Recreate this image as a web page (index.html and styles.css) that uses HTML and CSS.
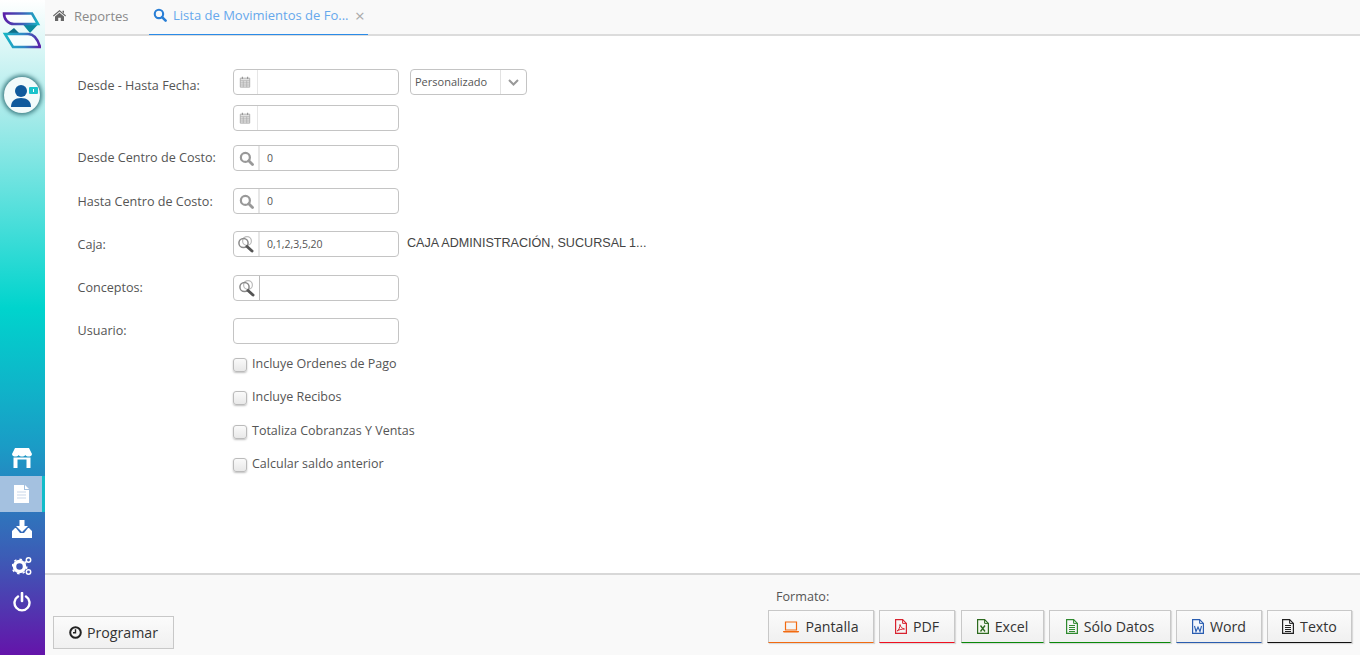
FILE: index.html
```html
<!DOCTYPE html>
<html lang="es">
<head>
  <meta charset="UTF-8">
  <title>Lista de Movimientos de Fondos</title>
  <link rel="stylesheet" href="styles.css">
</head>
<body>
  <svg width="0" height="0" class="defs">
    <defs>
      <linearGradient id="logo-top" x1="0" y1="0" x2="1" y2="0"><stop offset="0" stop-color="#5a1fa8"/><stop offset=".55" stop-color="#3f5fb8"/><stop offset="1" stop-color="#17b4c4"/></linearGradient>
      <linearGradient id="logo-bottom" x1="0" y1="0" x2="1" y2="0"><stop offset="0" stop-color="#17b4c4"/><stop offset=".55" stop-color="#2f86c4"/><stop offset="1" stop-color="#5a1fa8"/></linearGradient>
      <symbol id="i-search" viewBox="0 0 16 16"><circle cx="6.800" cy="6.800" r="4.800" fill="none" stroke="currentColor" stroke-width="2.400"/><path d="M10.400 10.400L14.400 14.400" stroke="currentColor" stroke-width="3" stroke-linecap="round"/></symbol>
      <symbol id="i-multi" viewBox="0 0 18 18"><circle cx="10" cy="6" r="4.400" fill="none" stroke="#bbb" stroke-width="1.200"/><circle cx="6.500" cy="8" r="4.600" fill="none" stroke="#8a8a8a" stroke-width="1.500"/><path d="M10 11.500L15 16" stroke="#555" stroke-width="3" stroke-linecap="round"/></symbol>
      <symbol id="i-cal" viewBox="0 0 14 14"><path d="M1.500 2.500h11v10.500h-11z" fill="#e2e2e2" stroke="#aaa" stroke-width="1"/><path d="M1.500 5.500h11M5 5.500V13M9 5.500V13M1.500 8h11M1.500 10.500h11" stroke="#aaa" stroke-width=".8"/><path d="M4 1v2.500M10 1v2.500" stroke="#999" stroke-width="1.400"/></symbol>
    </defs>
  </svg>

  <aside class="sidebar">
    <svg class="logo" width="40" height="38" viewBox="0 0 40 38">
      <path d="M4 23L13 16L20 23z" fill="#0f6f88"/>
      <path d="M22 12.500H37L29 21z" fill="#0a8a9d"/>
      <path d="M3 1.500H31L37 12H13C7 12 3 7 3 1.500z" fill="#fff" fill-opacity=".7" stroke="url(#logo-top)" stroke-width="2.600"/>
      <path d="M4 22H27C33 22 37 28 39 35H12z" fill="#fff" fill-opacity=".7" stroke="url(#logo-bottom)" stroke-width="2.600"/>
    </svg>
    <div class="avatar">
      <svg width="26" height="26" viewBox="0 0 26 26"><circle cx="11" cy="7" r="6" fill="#0f5a9c"/><path d="M1 23c0-6 4-9 10-9s10 3 10 9z" fill="#0f5a9c"/></svg>
      <span class="avatar-badge"></span>
    </div>
    <nav class="side-nav">
      <a class="side-item">
        <svg width="20" height="20" viewBox="0 0 20 20"><path d="M3 0h14l3 6c0 2-2 2.500-3.300 2.500S14 8 13.300 7c-.6 1-2 1.500-3.300 1.500S7.300 8 6.700 7C6 8 4.600 8.500 3.300 8.500S0 8 0 6z" fill="#fff"/><path d="M1.500 9.500h17V20h-4v-8.500h-9V20h-4z" fill="#fff"/></svg>
      </a>
      <a class="side-item active">
        <svg width="15" height="18" viewBox="0 0 15 18"><path d="M0 0h10v5h5v13H0z" fill="#fff"/><path d="M11 0l4 4h-4z" fill="#fff"/><path d="M3 7h9M3 10h9M3 13h9" stroke="#dbe5f1" stroke-width="1.500"/></svg>
      </a>
      <a class="side-item side-dl">
        <svg width="20" height="18" viewBox="0 0 20 18"><path d="M7.500 0h5v6h3.500l-6 6-6-6h3.500z" fill="#fff"/><path d="M0 11l3-3h1l4 5h4l4-5h1l3 3v7H0z" fill="#fff"/></svg>
      </a>
      <a class="side-item">
        <svg width="20" height="20" viewBox="0 0 20 20"><circle cx="7.500" cy="10.500" r="5" fill="none" stroke="#fff" stroke-width="3.500"/><circle cx="7.500" cy="10.500" r="7.300" fill="none" stroke="#fff" stroke-width="1.500" stroke-dasharray="2.500 3.200"/><circle cx="16.500" cy="4" r="2.200" fill="none" stroke="#fff" stroke-width="1.500"/><circle cx="16.500" cy="16" r="2.200" fill="none" stroke="#fff" stroke-width="1.500"/></svg>
      </a>
      <a class="side-item">
        <svg width="18" height="20" viewBox="0 0 18 20"><path d="M5 4.500a7.500 7.500 0 1 0 8 0" fill="none" stroke="#fff" stroke-width="2.400" stroke-linecap="round"/><path d="M9 1v8" stroke="#fff" stroke-width="2.600" stroke-linecap="round"/></svg>
      </a>
    </nav>
  </aside>

  <main class="main">
    <header class="tabs">
      <a class="tab">
        <svg width="13" height="11" viewBox="0 0 13 11"><path d="M6.500 0L13 5.600l-.7.800L6.500 1.500.7 6.400 0 5.600z" fill="#666"/><path d="M2 6.500L6.500 2.700 11 6.500V11H7.800V7.800H5.200V11H2z" fill="#666"/><path d="M9.500 .8h1.500v2.500L9.500 2z" fill="#666"/></svg>
        Reportes
      </a>
      <a class="tab tab-active">
        <svg class="tab-search" width="14" height="14"><use href="#i-search"/></svg>
        Lista de Movimientos de Fo...
        <span class="tab-close">×</span>
      </a>
    </header>

    <form class="form">
      <div class="row row-date">
        <label class="label">Desde - Hasta Fecha:</label>
        <div class="date-col">
          <div class="date-line">
            <div class="field"><span class="addon addon-cal"><svg width="12" height="12"><use href="#i-cal"/></svg></span><input class="input"></div>
            <div class="select"><span class="select-text">Personalizado</span><span class="select-arrow"><svg width="11" height="7" viewBox="0 0 11 7"><path d="M1 1l4.500 4.500L10 1" fill="none" stroke="#999" stroke-width="2"/></svg></span></div>
          </div>
          <div class="field"><span class="addon addon-cal"><svg width="12" height="12"><use href="#i-cal"/></svg></span><input class="input"></div>
        </div>
      </div>
      <div class="row row-cc1">
        <label class="label">Desde Centro de Costo:</label>
        <div class="field"><span class="addon"><svg class="icon-search" width="15" height="15"><use href="#i-search"/></svg></span><input class="input" value="0"></div>
      </div>
      <div class="row row-cc2">
        <label class="label">Hasta Centro de Costo:</label>
        <div class="field"><span class="addon"><svg class="icon-search" width="15" height="15"><use href="#i-search"/></svg></span><input class="input" value="0"></div>
      </div>
      <div class="row row-caja">
        <label class="label">Caja:</label>
        <div class="field"><span class="addon"><svg width="18" height="18"><use href="#i-multi"/></svg></span><input class="input" value="0,1,2,3,5,20"></div>
        <span class="desc">CAJA ADMINISTRACIÓN, SUCURSAL 1...</span>
      </div>
      <div class="row row-conc">
        <label class="label">Conceptos:</label>
        <div class="field"><span class="addon addon-plain"><svg width="18" height="18"><use href="#i-multi"/></svg></span><input class="input input-boxed"></div>
      </div>
      <div class="row row-user">
        <label class="label">Usuario:</label>
        <div class="field"><input class="input"></div>
      </div>
      <div class="checks">
        <label class="check"><span class="box"></span>Incluye Ordenes de Pago</label>
        <label class="check"><span class="box"></span>Incluye Recibos</label>
        <label class="check"><span class="box"></span>Totaliza Cobranzas Y Ventas</label>
        <label class="check"><span class="box"></span>Calcular saldo anterior</label>
      </div>
    </form>

    <footer class="footer">
      <button type="button" class="btn btn-program">
        <svg width="13" height="13" viewBox="0 0 13 13"><circle cx="6.500" cy="6.500" r="5.300" fill="none" stroke="#222" stroke-width="2"/><path d="M6.500 3.200v3.500H4" fill="none" stroke="#222" stroke-width="1.400"/></svg>
        Programar
      </button>
      <div class="formats">
        <div class="formats-label">Formato:</div>
        <div class="formats-buttons">
          <button type="button" class="btn fmt fmt-screen">
            <svg width="16" height="12" viewBox="0 0 16 12"><path d="M2.500 1h11v8h-11z" fill="none" stroke="#f26a10" stroke-width="1.200"/><path d="M0 10h16c0 1-.5 1.500-1.500 1.500h-13C.5 11.500 0 11 0 10z" fill="#f26a10"/></svg>
            Pantalla
          </button>
          <button type="button" class="btn fmt fmt-pdf">
            <svg width="12" height="15" viewBox="0 0 12 15"><path d="M.6.600h7l3.800 3.800v10H.6z" fill="none" stroke="#d8232f" stroke-width="1.200"/><path d="M7.600.600v3.800h3.800" fill="none" stroke="#d8232f"/><path d="M2 12c2-1 3-4 3-6.500.5 2.500 2 4 4.500 4.500-2.500 0-5 .5-7.500 2z" fill="none" stroke="#d8232f"/></svg>
            PDF
          </button>
          <button type="button" class="btn fmt fmt-excel">
            <svg width="12" height="15" viewBox="0 0 12 15"><path d="M.6.600h7l3.800 3.800v10H.6z" fill="#f4f8ee" stroke="#2d6a1f" stroke-width="1.200"/><path d="M7.600.600v3.800h3.800" fill="none" stroke="#2d6a1f"/><path d="M3.500 6.500l4.500 6M8 6.500l-4.500 6" stroke="#2d6a1f" stroke-width="1.300"/></svg>
            Excel
          </button>
          <button type="button" class="btn fmt fmt-data">
            <svg width="12" height="15" viewBox="0 0 12 15"><path d="M.6.600h7l3.800 3.800v10H.6z" fill="none" stroke="#2f8a2f" stroke-width="1.200"/><path d="M7.600.600v3.800h3.800" fill="none" stroke="#2f8a2f"/><path d="M3 6.500h6M3 8.500h6M3 10.500h6M3 12.500h6" stroke="#2f8a2f"/></svg>
            Sólo Datos
          </button>
          <button type="button" class="btn fmt fmt-word">
            <svg width="12" height="15" viewBox="0 0 12 15"><path d="M.6.600h7l3.800 3.800v10H.6z" fill="#f3f7fd" stroke="#2a5db0" stroke-width="1.200"/><path d="M7.600.600v3.800h3.800" fill="none" stroke="#2a5db0"/><path d="M2.500 7l1.500 5.500L6 8l2 4.500L9.500 7" fill="none" stroke="#2a5db0" stroke-width="1.100"/></svg>
            Word
          </button>
          <button type="button" class="btn fmt fmt-text">
            <svg width="12" height="15" viewBox="0 0 12 15"><path d="M.6.600h7l3.800 3.800v10H.6z" fill="none" stroke="#222" stroke-width="1.200"/><path d="M7.600.600v3.800h3.800" fill="none" stroke="#222"/><path d="M3 6.500h6M3 8.500h6M3 10.500h6M3 12.500h6" stroke="#222"/></svg>
            Texto
          </button>
        </div>
      </div>
    </footer>
  </main>
</body>
</html>
```

FILE: styles.css
```css
* {
  box-sizing: border-box;
}
html,
body {
  height: 100%;
}
body {
  margin: 0;
  display: flex;
  overflow: hidden;
  font-family: "Open Sans", sans-serif;
  font-size: 12.6px;
  color: #555;
  background-color: #fff;
}
.defs {
  position: absolute;
}

/* sidebar */
.sidebar {
  width: 45px;
  flex: none;
  height: 655px;
  display: flex;
  flex-direction: column;
  align-items: center;
  background: linear-gradient(to bottom, #fff 0%, #a9ebea 17%, #00d4cd 47%, #1a9cc6 68%, #3c5cb6 85%, #6414aa 100%);
}
.logo {
  margin-top: 12px;
  margin-left: -3px;
}
.avatar {
  position: relative;
  width: 36px;
  height: 36px;
  margin-top: 27px;
  margin-left: -1px;
  padding: 7px 0 0 6px;
  border-radius: 50%;
  background-color: #f2fbfb;
  box-shadow: 0 0 4px 2px #3f7f85;
}
.avatar-badge {
  position: absolute;
  top: 10px;
  right: 2px;
  width: 9px;
  height: 7px;
  border-radius: 1px;
  background-color: #19c3cb;
}
.avatar-badge::after {
  content: "";
  position: absolute;
  top: 2px;
  left: 4px;
  width: 1px;
  height: 3px;
  background-color: #fff;
}
.side-nav {
  margin-top: auto;
  margin-bottom: 35px;
  width: 100%;
}
.side-item {
  height: 36px;
  display: flex;
  align-items: center;
  justify-content: center;
  margin-left: -2px;
}
.side-dl {
  padding-bottom: 3px;
}
.side-item.active {
  margin-left: 0;
  background-color: #a4c1e0;
  border-right: 3px solid #12bcc9;
}

/* tabs */
.main {
  flex: 1;
  min-width: 0;
  height: 655px;
  display: flex;
  flex-direction: column;
}
.tabs {
  height: 36px;
  flex: none;
  display: flex;
  padding-left: 8px;
  background-color: #f9f9f9;
  border-bottom: 2px solid #dcdcdc;
}
.tab {
  height: 36px;
  display: flex;
  align-items: center;
  gap: 8px;
  padding-bottom: 5px;
  color: #8a8a8a;
  font-size: 13px;
  white-space: nowrap;
}
.tab-active {
  margin-left: 20px;
  gap: 6.5px;
  height: 35px;
  padding: 0 3.5px 4px 4px;
  color: #66a8ec;
  border-bottom: 1px solid #2a8be8;
}
.tab-search {
  color: #2a7fd6;
}
.tab-close {
  margin-left: 0;
  color: #aaa;
  font-size: 17px;
  line-height: 1;
}

/* form */
.form {
  flex: 1;
  padding: 33px 0 0 32.5px;
}
.row {
  display: flex;
  align-items: flex-start;
}
.label {
  width: 155.5px;
  flex: none;
  padding-top: 4px;
  color: #555;
}
.date-col {
  display: flex;
  flex-direction: column;
  gap: 10px;
}
.date-line {
  display: flex;
  gap: 11px;
}
.row-date .label {
  padding-top: 8px;
}
.row-cc1 {
  margin-top: 14px;
}
.row-cc2 {
  margin-top: 17px;
}
.row-cc2 .label,
.row-caja .label {
  padding-top: 5px;
}
.row-caja {
  margin-top: 17px;
}
.row-conc {
  margin-top: 18px;
}
.row-user {
  margin-top: 17px;
}
.field {
  width: 166px;
  height: 26px;
  display: flex;
  flex: none;
  border: 1px solid #c4c4c4;
  border-radius: 4px;
  background-color: #fff;
  overflow: hidden;
}
.addon {
  width: 26px;
  flex: none;
  display: flex;
  align-items: center;
  justify-content: center;
  border-right: 2px solid #e6e6e6;
}
.addon-cal {
  width: 24px;
  padding-right: 2px;
  border-right-width: 1px;
}
.addon-plain {
  width: 25px;
  border-right: 0;
}
.icon-search {
  color: #999;
}
.input {
  flex: 1;
  min-width: 0;
  height: 100%;
  padding: 0 7px;
  border: 0;
  outline: 0;
  background: transparent;
  font-family: "Open Sans", sans-serif;
  font-size: 10.5px;
  color: #555;
}
.input-boxed {
  border-left: 1px solid #bbb;
}
.select {
  width: 117px;
  height: 26px;
  display: flex;
  border: 1px solid #c4c4c4;
  border-radius: 4px;
}
.select-text {
  flex: 1;
  padding: 4px 0 0 4px;
  font-size: 11px;
  color: #555;
}
.select-arrow {
  width: 26px;
  display: flex;
  align-items: center;
  justify-content: center;
  border-left: 1px solid #e2e2e2;
}
.desc {
  margin-left: 8px;
  padding-top: 5px;
  font-family: "Liberation Sans", sans-serif;
  font-size: 12.6px;
  color: #444;
}
.checks {
  margin-top: 10px;
  padding-left: 155.5px;
  display: flex;
  flex-direction: column;
}
.check {
  height: 33.4px;
  display: flex;
  align-items: flex-start;
  gap: 5px;
  color: #555;
  font-size: 12.5px;
  line-height: 20px;
}
.box {
  width: 14px;
  height: 14px;
  margin-top: 4px;
  border: 1px solid #bbb;
  border-radius: 3px;
  background: linear-gradient(to bottom, #fafafa, #e8e8e8);
  box-shadow: 0 1px 2px rgba(0, 0, 0, 0.25);
}

/* footer */
.footer {
  height: 82px;
  flex: none;
  display: flex;
  justify-content: space-between;
  align-items: flex-end;
  padding: 0 8px 6px;
  background-color: #f9f9f9;
  border-top: 2px solid #d8d8d8;
}
.btn {
  height: 33px;
  display: flex;
  align-items: center;
  justify-content: center;
  gap: 6px;
  border: 1px solid #c8c8c8;
  background: linear-gradient(to bottom, #fbfbfb, #f0f0f0);
  font-family: "Open Sans", sans-serif;
  font-size: 14.2px;
  color: #333;
  white-space: nowrap;
}
.btn-program {
  width: 121px;
  gap: 5px;
}
.formats {
  padding-bottom: 6px;
}
.formats-label {
  margin: 0 0 4px 8px;
  font-size: 12.6px;
  color: #555;
  line-height: 18px;
}
.formats-buttons {
  display: flex;
  gap: 5px;
}
.fmt {
  box-shadow: 1px 1px 1px rgba(0, 0, 0, 0.12);
}
.fmt-screen {
  width: 106px;
  border-bottom-color: #f26a10;
}
.fmt-pdf {
  width: 76px;
  border-bottom-color: #f01020;
  margin-right: 1px;
}
.fmt-excel {
  width: 83px;
  border-bottom-color: #0a8a0a;
}
.fmt-data {
  width: 122px;
  border-bottom-color: #0a8a0a;
}
.fmt-word {
  width: 86px;
  border-bottom-color: #2a5db0;
}
.fmt-text {
  width: 85px;
  border-bottom-color: #111;
}
```
